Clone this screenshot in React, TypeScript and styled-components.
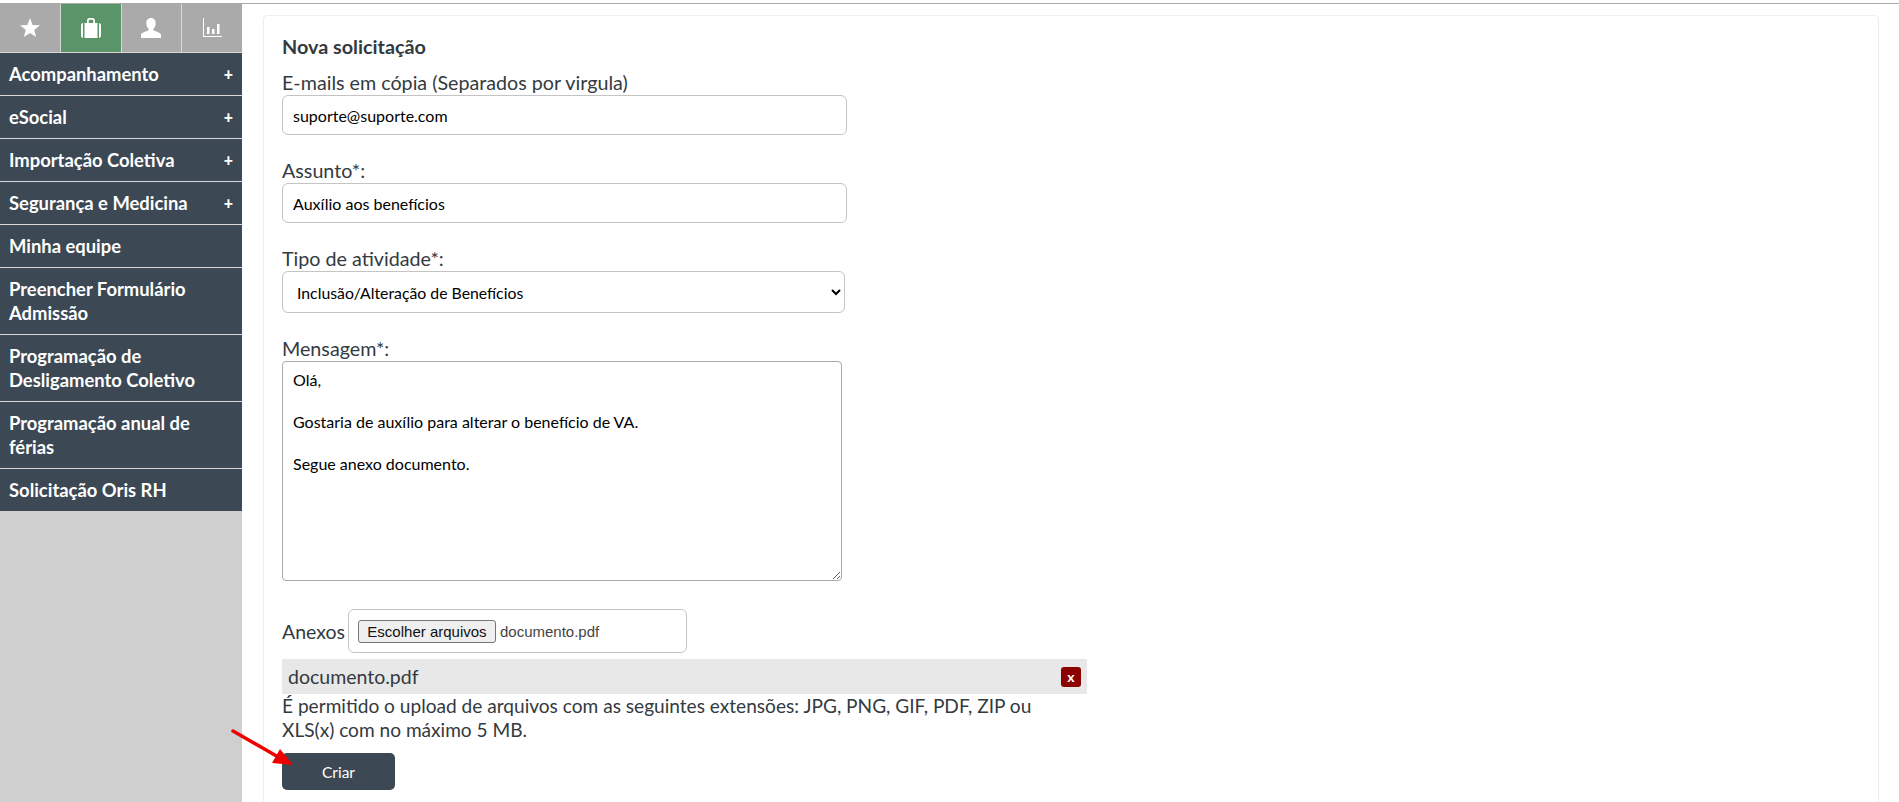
import React from "react";
import styled, { createGlobalStyle } from "styled-components";

const GlobalStyle = createGlobalStyle`
  html, body {
    margin: 0;
    padding: 0;
    height: 100%;
    overflow: hidden;
    background: #fff;
    font-family: "Lato", "Liberation Sans", sans-serif;
  }
  * { box-sizing: border-box; }
`;

const Page = styled.div`
  height: 802px;
  padding-top: 3px;
  position: relative;
`;

const Frame = styled.div`
  display: flex;
  height: 799px;
  border-top: 1px solid #aaaaaa;
`;

const Sidebar = styled.aside`
  width: 242px;
  flex-shrink: 0;
  background: #cfcfcf;
`;

const Tabs = styled.div`
  display: flex;
  height: 49px;
  border-bottom: 1px solid #d8d8d8;
`;

const Tab = styled.div<{ $active?: boolean }>`
  flex: 1;
  display: flex;
  align-items: center;
  justify-content: center;
  background: ${(p) => (p.$active ? "#5a9469" : "#aaaaaa")};
  border-left: 1px solid #d8d8d8;

  &:first-child {
    border-left: none;
  }
`;

const TabIcon = styled.svg`
  width: 22px;
  height: 22px;
  fill: #fff;
`;

const MenuItem = styled.div`
  display: flex;
  justify-content: space-between;
  align-items: center;
  background: #3c4854;
  color: #fff;
  font-size: 18.4px;
  font-weight: 700;
  line-height: 24px;
  padding: 9px;
  border-bottom: 1px solid #d8d8d8;

  &:last-child {
    border-bottom: none;
  }
`;

const MenuLabel = styled.span`
  max-width: 205px;
`;

const Plus = styled.span`
  font-size: 16px;
  font-weight: 900;
`;

const Content = styled.main`
  flex: 1;
  padding: 11px 20px 0 21px;
`;

const Card = styled.section`
  height: 800px;
  padding: 18px 18px;
  border: 1px solid #efefef;
  border-radius: 4px;
  box-shadow: 0 1px 2px rgba(0, 0, 0, 0.04);
  color: #333a40;
`;

const Title = styled.h1`
  margin: 0 0 12px;
  font-size: 19.8px;
  font-weight: 700;
  line-height: 24px;
`;

const Field = styled.div<{ $gap: number }>`
  margin-bottom: ${(p) => p.$gap}px;
`;

const Label = styled.label`
  display: block;
  font-size: 19.7px;
  line-height: 25px;
`;

const TextInput = styled.input`
  display: block;
  width: 565px;
  height: 40px;
  padding: 0 10px;
  border: 1px solid #c4c4c4;
  border-radius: 6px;
  font: 400 16px "Lato", sans-serif;
  color: #000;
  outline: none;
`;

const Select = styled.select`
  display: block;
  width: 563px;
  height: 42px;
  padding: 0 10px;
  border: 1px solid #c4c4c4;
  border-radius: 6px;
  background: #fff;
  font: 400 15.8px "Lato", sans-serif;
  color: #000;
`;

const TextArea = styled.textarea`
  display: block;
  width: 560px;
  height: 220px;
  padding: 7px 10px;
  border: 1px solid #aaaaaa;
  border-radius: 4px;
  font: 400 16px/21px "Lato", sans-serif;
  color: #000;
  outline: none;
`;

const AttachRow = styled.div`
  display: flex;
  align-items: center;
  gap: 3px;
  margin-bottom: 6px;
`;

const AttachLabel = styled.span`
  font-size: 19.5px;
`;

const FileBox = styled.div`
  display: flex;
  align-items: center;
  gap: 4px;
  width: 339px;
  height: 44px;
  padding: 0 9px;
  border: 1px solid #c4c4c4;
  border-radius: 6px;
  font: 15px "Liberation Sans", sans-serif;
  color: #444;
`;

const ChooseButton = styled.button`
  height: 23px;
  width: 138px;
  padding: 0;
  border: 1px solid #767676;
  border-radius: 3px;
  background: #efefef;
  font: 15px "Liberation Sans", sans-serif;
  color: #111;
`;

const FileRow = styled.div`
  display: flex;
  align-items: center;
  justify-content: space-between;
  width: 805px;
  height: 35px;
  padding: 0 6px;
  background: #e8e8e8;
  font-size: 19.5px;
`;

const RemoveButton = styled.button`
  width: 20px;
  height: 20px;
  padding: 0;
  border: none;
  border-radius: 3px;
  background: #8b0000;
  color: #fff;
  font: 700 14px "Lato", sans-serif;
`;

const Help = styled.p`
  width: 760px;
  margin: 0 0 11px;
  font-size: 19.1px;
  line-height: 24px;
`;

const SubmitButton = styled.button`
  width: 113px;
  height: 37px;
  border: none;
  border-radius: 5px;
  background: #3c4854;
  color: #fff;
  font: 400 15.5px "Lato", sans-serif;
`;

const Arrow = styled.svg`
  position: absolute;
  left: 228px;
  top: 725px;
`;

const menu: { label: string; plus?: boolean }[] = [
  { label: "Acompanhamento", plus: true },
  { label: "eSocial", plus: true },
  { label: "Importação Coletiva", plus: true },
  { label: "Segurança e Medicina", plus: true },
  { label: "Minha equipe" },
  { label: "Preencher Formulário Admissão" },
  { label: "Programação de Desligamento Coletivo" },
  { label: "Programação anual de férias" },
  { label: "Solicitação Oris RH" },
];

export default function App() {
  return (
    <Page>
      <GlobalStyle />
      <Frame>
        <Sidebar>
          <Tabs>
            <Tab>
              <TabIcon viewBox="0 0 22 22">
                <polygon points="11,1 13.6,8 21,8.3 15.2,12.9 17.2,20 11,16 4.8,20 6.8,12.9 1,8.3 8.4,8" />
              </TabIcon>
            </Tab>
            <Tab $active>
              <TabIcon viewBox="0 0 22 22">
                <path d="M1 8.5C1 7 2 6 3 6v15C2 21 1 20 1 18.5zM19 6c1 0 2 1 2 2.5v10c0 1.500-1 2.500-2 2.500zM4.500 6H7V3.500C7 2 8 1 9.500 1h3C14 1 15 2 15 3.500V6h2.500v15h-13zM8.800 6h4.400V3.500c0-.5-.3-.8-.8-.8H9.600c-.5 0-.8.300-.8.800z" />
              </TabIcon>
            </Tab>
            <Tab>
              <TabIcon viewBox="0 0 22 22">
                <path d="M11 1c3 0 4.700 2.200 4.700 5.200 0 2.400-1 4.300-2.100 5.300-.5.500-.4 1.500.3 1.900 2.300 1 6.600 2 7.100 4.100V21H1v-3.500c.5-2.100 4.800-3.100 7.100-4.100.7-.4.8-1.400.3-1.900C7.300 10.500 6.300 8.600 6.300 6.200 6.300 3.200 8 1 11 1z" />
              </TabIcon>
            </Tab>
            <Tab>
              <TabIcon viewBox="0 0 22 22">
                <path d="M2 1h1v18h18v1H2z" />
                <path d="M6 10h2.500v7H6zM11 12h2.500v5H11zM16 7h2.500v10H16z" />
              </TabIcon>
            </Tab>
          </Tabs>
          {menu.map((m) => (
            <MenuItem key={m.label}>
              <MenuLabel>{m.label}</MenuLabel>
              {m.plus && <Plus>+</Plus>}
            </MenuItem>
          ))}
        </Sidebar>
        <Content>
          <Card>
            <Title>Nova solicitação</Title>
            <Field $gap={23}>
              <Label>E-mails em cópia (Separados por virgula)</Label>
              <TextInput readOnly value="suporte@suporte.com" />
            </Field>
            <Field $gap={23}>
              <Label>Assunto*:</Label>
              <TextInput readOnly value="Auxílio aos benefícios" />
            </Field>
            <Field $gap={23}>
              <Label>Tipo de atividade*:</Label>
              <Select defaultValue="a">
                <option value="a">Inclusão/Alteração de Benefícios</option>
              </Select>
            </Field>
            <Field $gap={28}>
              <Label>Mensagem*:</Label>
              <TextArea
                readOnly
                value={"Olá,\n\nGostaria de auxílio para alterar o benefício de VA.\n\nSegue anexo documento."}
              />
            </Field>
            <AttachRow>
              <AttachLabel>Anexos</AttachLabel>
              <FileBox>
                <ChooseButton>Escolher arquivos</ChooseButton>
                documento.pdf
              </FileBox>
            </AttachRow>
            <FileRow>
              documento.pdf
              <RemoveButton>x</RemoveButton>
            </FileRow>
            <Help>
              É permitido o upload de arquivos com as seguintes extensões: JPG, PNG, GIF, PDF, ZIP ou XLS(x) com no máximo 5 MB.
            </Help>
            <SubmitButton>Criar</SubmitButton>
          </Card>
        </Content>
      </Frame>
      <Arrow width="70" height="50" viewBox="0 0 70 50">
        <line x1="5" y1="6" x2="52" y2="33" stroke="#ee0000" strokeWidth="3.500" strokeLinecap="round" />
        <polygon points="65,40 44,38 52,24" fill="#ee0000" />
      </Arrow>
    </Page>
  );
}
